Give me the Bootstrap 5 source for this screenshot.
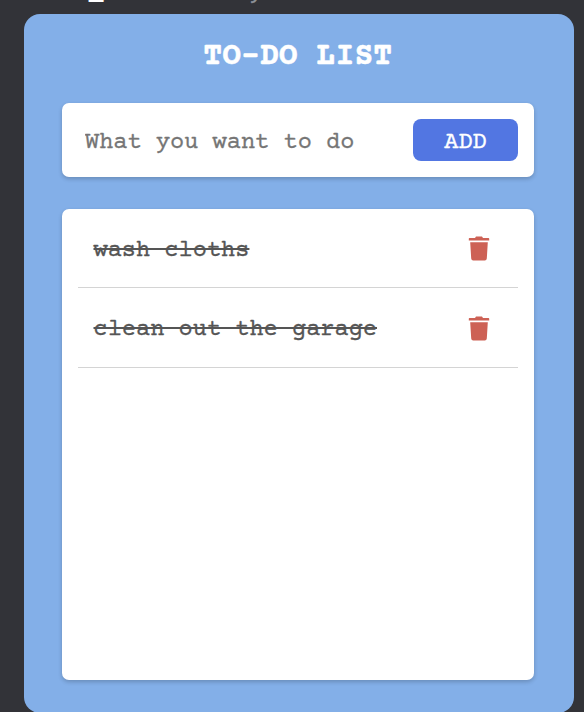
<!DOCTYPE html>
<html lang="en">
<head>
<meta charset="utf-8">
<meta name="viewport" content="width=device-width, initial-scale=1">
<title>To-Do List</title>
<link href="https://cdn.jsdelivr.net/npm/bootstrap@5.3.0/dist/css/bootstrap.min.css" rel="stylesheet">
<style>
body{background:#323338;font-family:"Courier Prime","Liberation Mono",monospace;height:712px}
.top-strip{height:14px;padding-left:89px;gap:147.5px;font-size:23.6px;line-height:20px}
.top-strip span{margin-top:-19px;height:20px}
.mark-a{color:#fff;font-weight:700}
.top-strip .mark-b{color:#8e9299;margin-top:-17px;margin-left:-1px;-webkit-text-stroke:.4px}
.todo-app{width:550px;height:699px;margin-left:24px;border-radius:16px;background:#83afe8;padding:26px 40.5px 32px 38px}
.todo-title{font-size:31.5px;font-weight:700;line-height:35px;color:#fff;margin:0 0 28px;-webkit-text-stroke:.4px}
.panel{background:#fff;border-radius:7px;box-shadow:0 2px 4px rgba(0,0,0,.2)}
.entry{height:74.4px;padding:16px 15.5px 16px 16px;margin-bottom:31.6px}
.entry .form-control{font-size:23.65px;line-height:28px;padding:6px 7px 0;color:#555;height:42.4px;-webkit-text-stroke:.3px}
.entry .form-control::placeholder{color:#757575;opacity:1}
.add-btn,.add-btn:hover{width:105px;height:42.4px;background:#5276e2;color:#fff;font-size:23.6px;line-height:28px;border-radius:8px;-webkit-text-stroke:.4px}
.entry .add-btn{padding:5px 0 0}
.tasks{height:471px;padding:0 15.5px 0 16px}
.task{height:79px;padding:1.2px 28.5px 0 15.5px;border-bottom:1px solid #d4d4d4;color:#555;font-size:23.65px}
.task + .task{height:80px}
.task del{text-decoration:underline 2px;text-underline-offset:-8px;text-decoration-skip-ink:none;line-height:28px;padding-top:4px;-webkit-text-stroke:.3px}
.trash{width:22px;height:25px;fill:#cd6155}
</style>
<script src="https://cdn.jsdelivr.net/npm/bootstrap@5.3.0/dist/js/bootstrap.bundle.min.js"></script>
</head>
<body class="overflow-hidden">
<div class="top-strip d-flex overflow-hidden"><span class="mark-a">_</span><span class="mark-b">y</span></div>
<main class="todo-app">
<h1 class="todo-title text-center">TO-DO LIST</h1>
<form class="panel entry d-flex">
<input class="form-control border-0 bg-transparent shadow-none flex-grow-1" type="text" placeholder="What you want to do" aria-label="Task">
<button class="btn add-btn border-0 flex-shrink-0" type="button">ADD</button>
</form>
<ul class="panel tasks list-unstyled mb-0">
<li class="task d-flex align-items-center justify-content-between"><del>wash cloths</del>
<svg class="trash" viewBox="0 0 22 25" aria-label="Delete"><path d="M1.5 2H7l1-1.5h6L15 2h5.5q.7 0 .7.7v1.8H.8V2.7q0-.7.7-.7ZM2.2 6.2h17.6l-1 16.3q-.2 2-2 2H5.2q-1.8 0-2-2Z"/></svg></li>
<li class="task d-flex align-items-center justify-content-between"><del>clean out the garage</del>
<svg class="trash" viewBox="0 0 22 25" aria-label="Delete"><path d="M1.5 2H7l1-1.5h6L15 2h5.5q.7 0 .7.7v1.8H.8V2.7q0-.7.7-.7ZM2.2 6.2h17.6l-1 16.3q-.2 2-2 2H5.2q-1.8 0-2-2Z"/></svg></li>
</ul>
</main>
</body>
</html>
